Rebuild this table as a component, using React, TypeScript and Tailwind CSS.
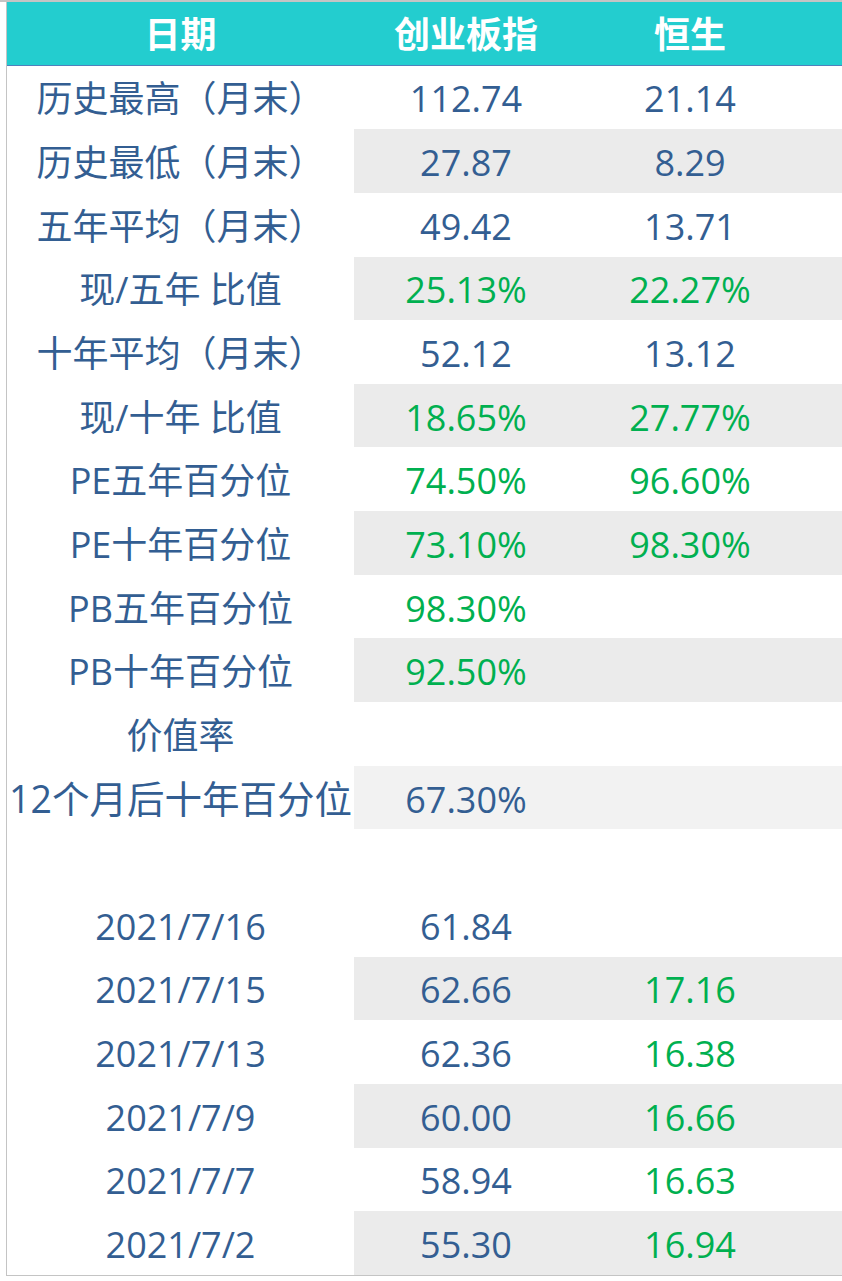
import React from "react";

type Row = {
  label: string;
  a?: string;
  b?: string;
  aGreen?: boolean;
  bGreen?: boolean;
  shade?: "gray" | "light";
  big?: boolean;
};

const rows: Row[] = [
  { label: "历史最高（月末）", a: "112.74", b: "21.14" },
  { label: "历史最低（月末）", a: "27.87", b: "8.29", shade: "gray" },
  { label: "五年平均（月末）", a: "49.42", b: "13.71" },
  { label: "现/五年 比值", a: "25.13%", b: "22.27%", aGreen: true, bGreen: true, shade: "gray" },
  { label: "十年平均（月末）", a: "52.12", b: "13.12" },
  { label: "现/十年 比值", a: "18.65%", b: "27.77%", aGreen: true, bGreen: true, shade: "gray" },
  { label: "PE五年百分位", a: "74.50%", b: "96.60%", aGreen: true, bGreen: true },
  { label: "PE十年百分位", a: "73.10%", b: "98.30%", aGreen: true, bGreen: true, shade: "gray" },
  { label: "PB五年百分位", a: "98.30%", aGreen: true },
  { label: "PB十年百分位", a: "92.50%", aGreen: true, shade: "gray" },
  { label: "价值率" },
  { label: "12个月后十年百分位", a: "67.30%", shade: "light", big: true },
  { label: "" },
  { label: "2021/7/16", a: "61.84" },
  { label: "2021/7/15", a: "62.66", b: "17.16", bGreen: true, shade: "gray" },
  { label: "2021/7/13", a: "62.36", b: "16.38", bGreen: true },
  { label: "2021/7/9", a: "60.00", b: "16.66", bGreen: true, shade: "gray" },
  { label: "2021/7/7", a: "58.94", b: "16.63", bGreen: true },
  { label: "2021/7/2", a: "55.30", b: "16.94", bGreen: true, shade: "gray" },
];

const font = { fontFamily: '"Open Sans", "Noto Sans CJK SC", sans-serif' };

export default function App() {
  return (
    <div className="w-[842px] h-[1281px] bg-white border-t-2 border-[#c4c4c4]" style={font}>
      <div className="ml-[6px] border-l border-b border-[#c4c4c4]">
        {/* Header */}
        <div className="grid grid-cols-[347px_224px_224px_1fr] h-[63.65px] bg-[#23cdcf] border-b-[1.5px] border-[#4f81bd] text-white font-bold text-[36px] pt-[4px]">
          <div className="flex items-center justify-center">日期</div>
          <div className="flex items-center justify-center">创业板指</div>
          <div className="flex items-center justify-center">恒生</div>
          <div />
        </div>

        {/* Body */}
        {rows.map((r, i) => {
          const bg =
            r.shade === "gray" ? "bg-[#ebebeb]" : r.shade === "light" ? "bg-[#f2f2f2]" : "bg-white";
          return (
            <div key={i} className="grid grid-cols-[347px_224px_224px_1fr] h-[63.65px] text-[#335e92]">
              <div
                className={`flex items-center justify-center whitespace-nowrap pt-[4px] ${
                  r.big ? "text-[37.5px]" : /^\d/.test(r.label) ? "text-[36px]" : "text-[36px]"
                }`}
              >
                {r.label}
              </div>
              <div
                className={`flex items-center justify-center text-[36px] pt-[4px] ${bg} ${
                  r.aGreen ? "text-[#00b050]" : ""
                }`}
              >
                {r.a}
              </div>
              <div
                className={`flex items-center justify-center text-[36px] pt-[4px] ${bg} ${
                  r.bGreen ? "text-[#00b050]" : ""
                }`}
              >
                {r.b}
              </div>
              <div className={bg} />
            </div>
          );
        })}
      </div>
    </div>
  );
}
